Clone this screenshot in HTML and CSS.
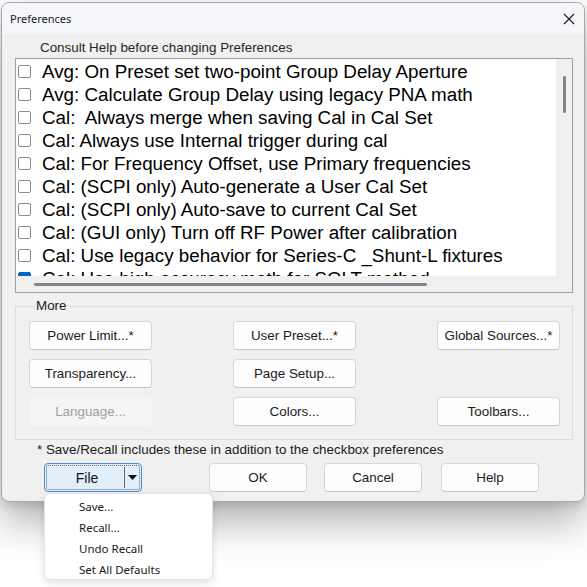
FILE: index.html
```html
<!DOCTYPE html>
<html>
<head>
<meta charset="utf-8">
<link rel="stylesheet" href="styles.css">
</head>
<body>
<div class="window">
  <div class="titlebar">
    <span class="title">Preferences</span>
    <svg class="close" width="12" height="12" viewBox="0 0 12 12"><path d="M1 1 L11 11 M11 1 L1 11" stroke="#1a1a1a" stroke-width="1.1" fill="none"/></svg>
  </div>
  <div class="content">
    <div class="caption">Consult Help before changing Preferences</div>
    <div class="listbox">
      <div class="list-main">
        <div class="rows">
          <div class="row"><span class="cb"></span><span class="lbl">Avg: On Preset set two-point Group Delay Aperture</span></div>
          <div class="row"><span class="cb"></span><span class="lbl">Avg: Calculate Group Delay using legacy PNA math</span></div>
          <div class="row"><span class="cb"></span><span class="lbl">Cal:  Always merge when saving Cal in Cal Set</span></div>
          <div class="row"><span class="cb"></span><span class="lbl">Cal: Always use Internal trigger during cal</span></div>
          <div class="row"><span class="cb"></span><span class="lbl">Cal: For Frequency Offset, use Primary frequencies</span></div>
          <div class="row"><span class="cb"></span><span class="lbl">Cal: (SCPI only) Auto-generate a User Cal Set</span></div>
          <div class="row"><span class="cb"></span><span class="lbl">Cal: (SCPI only) Auto-save to current Cal Set</span></div>
          <div class="row"><span class="cb"></span><span class="lbl">Cal: (GUI only) Turn off RF Power after calibration</span></div>
          <div class="row"><span class="cb"></span><span class="lbl">Cal: Use legacy behavior for Series-C _Shunt-L fixtures</span></div>
          <div class="row"><span class="cb checked"></span><span class="lbl">Cal: Use high accuracy math for SOLT method</span></div>
        </div>
        <div class="vscroll"><div class="vthumb"></div></div>
      </div>
      <div class="hscroll"><div class="hthumb"></div></div>
    </div>
    <fieldset class="group">
      <legend>More</legend>
      <div class="grid">
        <button class="btn">Power Limit...*</button>
        <button class="btn">User Preset...*</button>
        <button class="btn">Global Sources...*</button>
        <button class="btn">Transparency...</button>
        <button class="btn">Page Setup...</button>
        <span></span>
        <button class="btn disabled">Language...</button>
        <button class="btn">Colors...</button>
        <button class="btn">Toolbars...</button>
      </div>
    </fieldset>
    <div class="note">* Save/Recall includes these in addition to the checkbox preferences</div>
    <div class="actions">
      <div class="split">
        <div class="split-inner">
          <span class="split-label">File</span>
          <span class="split-div"></span>
          <span class="split-arrow"><svg width="9" height="5" viewBox="0 0 9 5"><path d="M0 0 H9 L4.5 5 Z" fill="#111"/></svg></span>
        </div>
      </div>
      <button class="btn act ok">OK</button>
      <button class="btn act cancel">Cancel</button>
      <button class="btn act help">Help</button>
    </div>
  </div>
</div>
<div class="menu">
  <div class="item">Save...</div>
  <div class="item">Recall...</div>
  <div class="item">Undo Recall</div>
  <div class="item">Set All Defaults</div>
</div>
</body>
</html>
```

FILE: styles.css
```css
html, body {
  margin: 0;
  padding: 0;
  background: #ffffff;
}
body {
  width: 587px;
  height: 587px;
  overflow: hidden;
  position: relative;
  font-family: "Liberation Sans", Arial, sans-serif;
}
.window {
  margin: 2px 0 0 1px;
  width: 584px;
  box-sizing: border-box;
  border: 1px solid #a9a9a9;
  border-radius: 8px;
  background: #f0f0f0;
  box-shadow: 0 20px 40px rgba(0, 0, 0, 0.3), 0 4px 10px rgba(0, 0, 0, 0.12);
  overflow: hidden;
}
.titlebar {
  height: 31px;
  background: #f4f6f9;
  display: flex;
  align-items: center;
  justify-content: space-between;
  padding: 0 8px 0 8px;
}
.title {
  font-family: "Noto Sans", "Open Sans", sans-serif;
  font-size: 11px;
  color: #1a1a1a;
  margin-top: -1px;
}
.close {
  margin-right: 1px;
  margin-top: 1px;
}
.content {
  padding: 6px 0 9px 13px;
}
.caption {
  font-size: 13.4px;
  line-height: 16px;
  color: #262626;
  padding-left: 25px;
}
.listbox {
  margin-top: 2px;
  width: 558px;
  height: 235px;
  box-sizing: border-box;
  border: 1px solid #a0a0a0;
  background: #ffffff;
  display: flex;
  flex-direction: column;
}
.list-main {
  flex: 1;
  display: flex;
  overflow: hidden;
}
.rows {
  flex: 1;
  padding-top: 1px;
  overflow: hidden;
}
.row {
  height: 23px;
  display: flex;
  align-items: center;
  white-space: pre;
}
.cb {
  width: 13px;
  height: 13px;
  box-sizing: border-box;
  border: 1px solid #8c8c8c;
  border-radius: 2px;
  background: #fff;
  margin-left: 2px;
  margin-right: 11px;
  flex: none;
}
.cb.checked {
  background: #0067c0;
  border-color: #0067c0;
}
.lbl {
  font-size: 18.8px;
  color: #000;
}
.vscroll {
  width: 16px;
  background: #f0f0f0;
  position: relative;
  display: flex;
  justify-content: center;
  padding-top: 17px;
  box-sizing: border-box;
}
.vthumb {
  width: 3px;
  height: 37px;
  background: #858585;
  border-radius: 2px;
}
.hscroll {
  height: 16px;
  background: #f0f0f0;
  display: flex;
  align-items: center;
  padding-left: 18px;
}
.hthumb {
  width: 393px;
  height: 3px;
  background: #858585;
  border-radius: 2px;
}
.group {
  margin: 5px 0 0 0;
  width: 558px;
  box-sizing: border-box;
  border: 1px solid #dcdcdc;
  padding: 7px 12px 13px 13px;
  min-width: 0;
}
.group legend {
  font-size: 13.4px;
  line-height: 16px;
  color: #1a1a1a;
  padding: 0 2px;
  margin-left: 5px;
}
.grid {
  display: grid;
  grid-template-columns: 123px 123px 123px;
  column-gap: 81px;
  row-gap: 9px;
}
.btn {
  height: 29px;
  box-sizing: border-box;
  background: #fdfdfd;
  border: 1px solid #d6d6d6;
  border-bottom-color: #c6c6c6;
  border-radius: 4px;
  font-family: "Liberation Sans", Arial, sans-serif;
  font-size: 13.4px;
  color: #1b1b1b;
  padding: 0;
  margin: 0;
}
.btn.disabled {
  background: #f5f5f5;
  border-color: #f5f5f5;
  color: #a0a0a0;
}
.note {
  margin-top: 2px;
  font-size: 13.4px;
  line-height: 16px;
  color: #1a1a1a;
  padding-left: 22px;
}
.actions {
  margin-top: 5px;
  display: flex;
  padding-left: 29px;
}
.act {
  width: 98px;
}
.ok { margin-left: 67px; }
.cancel { margin-left: 17px; }
.help { margin-left: 19px; }
.split {
  width: 98px;
  height: 29px;
  box-sizing: border-box;
  border: 1px solid #4c8fd6;
  border-radius: 4px;
  background: #e1effa;
  padding: 1px;
}
.split-inner {
  height: 100%;
  box-sizing: border-box;
  border: 1px dotted #6b6b6b;
  border-radius: 2px;
  display: flex;
  align-items: stretch;
}
.split-label {
  flex: 1;
  display: flex;
  align-items: center;
  justify-content: center;
  font-size: 14px;
  color: #111;
  padding-left: 3px;
}
.split-div {
  width: 1px;
  background: #6b6b6b;
  margin: 1px 0;
}
.split-arrow {
  width: 14px;
  display: flex;
  align-items: center;
  justify-content: center;
}
.menu {
  position: absolute;
  left: 44px;
  top: 493px;
  width: 169px;
  height: 87px;
  box-sizing: border-box;
  background: #ffffff;
  border: 1px solid #e3e3e3;
  border-radius: 6px;
  box-shadow: 0 3px 8px rgba(0, 0, 0, 0.12);
  padding-top: 2px;
}
.item {
  height: 21px;
  line-height: 21px;
  padding-left: 34px;
  font-family: "Noto Sans", "Open Sans", sans-serif;
  font-size: 11.5px;
  color: #1a1a1a;
}
```
